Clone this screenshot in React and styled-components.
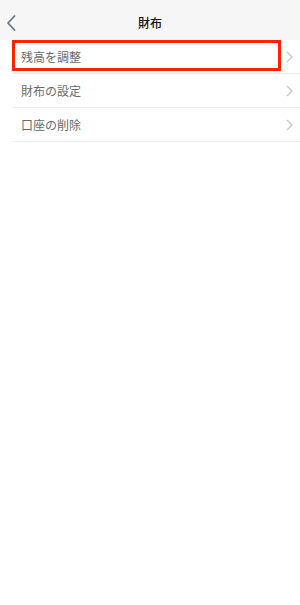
import React from "react";
import styled, { createGlobalStyle } from "styled-components";

const Global = createGlobalStyle`
  html, body { margin: 0; padding: 0; background: #ffffff; }
  body { font-family: "Noto Sans CJK JP", "Noto Sans", sans-serif; }
`;

const Page = styled.div`
  width: 300px;
  height: 605px;
  background: #ffffff;
`;

const Header = styled.header`
  height: 40px;
  box-sizing: border-box;
  padding-top: 5px;
  background: #f6f6f6;
  display: flex;
  align-items: center;
  justify-content: center;
  position: relative;
`;

const BackButton = styled.button`
  position: absolute;
  left: 5px;
  top: 15px;
  width: 12px;
  height: 16px;
  padding: 0;
  border: 0;
  background: transparent;
  display: flex;
  align-items: center;
  justify-content: center;
`;

const Title = styled.h1`
  margin: 0;
  font-size: 12px;
  font-weight: 500;
  color: #111;
  line-height: 1;
`;

const List = styled.ul`
  list-style: none;
  margin: 0;
  padding: 0 0 0 12px;
`;

const Row = styled.li`
  position: relative;
  height: 33px;
  border-bottom: 1px solid #ececec;
  display: flex;
  align-items: center;
  justify-content: space-between;
  padding: 0 7px 0 9px;
`;

const Label = styled.span`
  font-size: 12px;
  color: #6a6a6a;
  line-height: 1;
`;

const Highlight = styled.div`
  position: absolute;
  left: 0;
  top: 0;
  width: 269px;
  height: 31px;
  border: 3px solid #ff2200;
  box-sizing: border-box;
  pointer-events: none;
`;

const Chevron = () => (
  <svg width="7" height="12" viewBox="0 0 7 12">
    <path d="M1 1 L6 6 L1 11" fill="none" stroke="#c4c4c4" strokeWidth="1.2" />
  </svg>
);

const items = ["残高を調整", "財布の設定", "口座の削除"];

export default function App() {
  return (
    <Page>
      <Global />
      <Header>
        <BackButton aria-label="戻る">
          <svg width="10" height="16" viewBox="0 0 10 16">
            <path d="M8.5 1 L2 8 L8.5 15" fill="none" stroke="#6c7480" strokeWidth="1.8" strokeLinecap="round" strokeLinejoin="round" />
          </svg>
        </BackButton>
        <Title>財布</Title>
      </Header>
      <List>
        {items.map((t, i) => (
          <Row key={t}>
            <Label>{t}</Label>
            <Chevron />
            {i === 0 && <Highlight />}
          </Row>
        ))}
      </List>
    </Page>
  );
}
